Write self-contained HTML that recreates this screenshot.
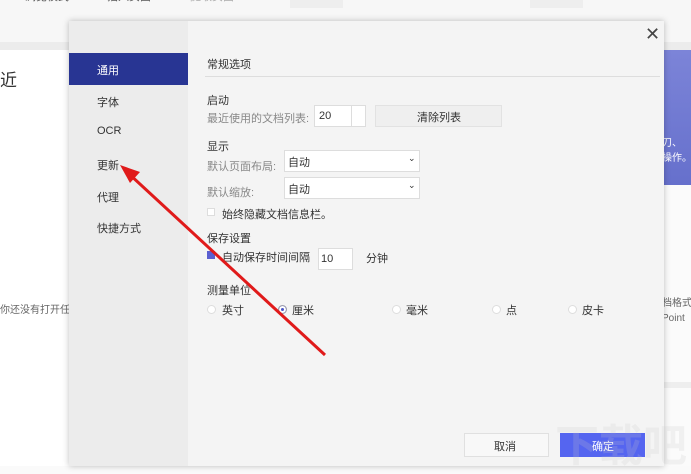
<!DOCTYPE html>
<html><head><meta charset="utf-8"><style>
*{margin:0;padding:0;box-sizing:border-box}
body{width:691px;height:466px;overflow:hidden;position:relative;background:#fafafa;font-family:"Liberation Sans","Noto Sans CJK SC",sans-serif;font-size:11px;color:#333}
.a{position:absolute;white-space:nowrap}
.inp{position:absolute;background:#fff;border:1px solid #ddd}
.rad{position:absolute;width:9px;height:9px;border-radius:50%;border:1px solid #ddd;background:#fff}
</style></head><body>
<div class="a" style="left:0;top:0;width:691px;height:42px;background:#f7f7f7"></div>
<div class="a" style="left:0;top:0;width:691px;height:7px;color:#555;font-size:11px;line-height:0">
<span class="a" style="left:25px;top:-3px">浏览模式</span><span class="a" style="left:107px;top:-3px">插入页面</span><span class="a" style="left:190px;top:-3px;color:#aaa">提取页面</span></div>
<div class="a" style="left:290px;top:0;width:53px;height:8px;background:#eee"></div>
<div class="a" style="left:530px;top:0;width:53px;height:8px;background:#eee"></div>
<div class="a" style="left:0;top:42px;width:691px;height:8px;background:#ececec"></div>
<div class="a" style="left:0;top:50px;width:70px;height:416px;background:#fff"></div>
<div class="a" style="left:0;top:66px;font-size:17px;color:#333">近</div>
<div class="a" style="left:0;top:301px;font-size:10px;color:#666">你还没有打开任</div>
<div class="a" style="left:664px;top:50px;width:27px;height:135px;background:linear-gradient(#7c84d8,#6670cc)"></div>
<div class="a" style="left:662px;top:134px;font-size:10px;color:#fff">刀、<br>操作。</div>
<div class="a" style="left:664px;top:185px;width:27px;height:281px;background:#fbfbfb"></div>
<div class="a" style="left:662px;top:296px;font-size:10px;color:#666;line-height:15px">档格式<br>Point</div>
<div class="a" style="left:664px;top:382px;width:27px;height:6px;background:#eee"></div>
<div class="a" style="left:69px;top:21px;width:595px;height:445px;background:#f4f4f4;box-shadow:0 0 6px rgba(0,0,0,.25)"></div>
<div class="a" style="left:69px;top:21px;width:119px;height:445px;background:#ececec"></div>
<div class="a" style="left:69px;top:53px;width:119px;height:32px;background:#283593"></div>
<div class="a" style="left:97px;top:62px;color:#fff">通用</div>
<div class="a" style="left:97px;top:94px">字体</div>
<div class="a" style="left:97px;top:125px">OCR</div>
<div class="a" style="left:97px;top:157px">更新</div>
<div class="a" style="left:97px;top:189px">代理</div>
<div class="a" style="left:97px;top:220px">快捷方式</div>
<div class="a" style="left:645px;top:24px;font-size:18px;color:#444">✕</div>
<div class="a" style="left:207px;top:56px">常规选项</div>
<div class="a" style="left:205px;top:76px;width:455px;height:1px;background:#ddd"></div>
<div class="a" style="left:207px;top:92px">启动</div>
<div class="a" style="left:207px;top:110px;color:#888">最近使用的文档列表:</div>
<div class="inp" style="left:314px;top:105px;width:52px;height:22px"></div><div class="a" style="left:319px;top:110px">20</div>
<div class="a" style="left:351px;top:105px;width:1px;height:22px;background:#ddd"></div>
<div class="a" style="left:375px;top:105px;width:127px;height:22px;background:#efefef;border:1px solid #e2e2e2"></div>
<div class="a" style="left:417px;top:109px">清除列表</div>
<div class="a" style="left:207px;top:138px">显示</div>
<div class="a" style="left:207px;top:158px;color:#888">默认页面布局:</div>
<div class="inp" style="left:284px;top:150px;width:136px;height:22px"></div><div class="a" style="left:288px;top:154px">自动</div><div class="a" style="left:408px;top:153px;font-size:9px">⌄</div>
<div class="a" style="left:207px;top:184px;color:#888">默认缩放:</div>
<div class="inp" style="left:284px;top:177px;width:136px;height:22px"></div><div class="a" style="left:288px;top:181px">自动</div><div class="a" style="left:408px;top:180px;font-size:9px">⌄</div>
<div class="a" style="left:207px;top:208px;width:8px;height:8px;background:#fff;border:1px solid #ddd"></div>
<div class="a" style="left:222px;top:206px">始终隐藏文档信息栏。</div>
<div class="a" style="left:207px;top:230px">保存设置</div>
<div class="a" style="left:207px;top:251px;width:8px;height:8px;background:#5a5fd0"></div>
<div class="a" style="left:222px;top:249px">自动保存时间间隔</div>
<div class="inp" style="left:318px;top:248px;width:35px;height:22px"></div><div class="a" style="left:321px;top:253px">10</div>
<div class="a" style="left:366px;top:250px">分钟</div>
<div class="a" style="left:207px;top:282px">测量单位</div>
<div class="rad" style="left:207px;top:305px"></div><div class="a" style="left:222px;top:302px">英寸</div>
<div class="rad" style="left:278px;top:305px;border-color:#99a;box-shadow:inset 0 0 0 2px #fff;background:#4a55c8"></div><div class="a" style="left:292px;top:302px">厘米</div>
<div class="rad" style="left:392px;top:305px"></div><div class="a" style="left:406px;top:302px">毫米</div>
<div class="rad" style="left:492px;top:305px"></div><div class="a" style="left:506px;top:302px">点</div>
<div class="rad" style="left:568px;top:305px"></div><div class="a" style="left:582px;top:302px">皮卡</div>
<div class="a" style="left:464px;top:433px;width:85px;height:24px;background:#f8f8f8;border:1px solid #e0e0e0"></div>
<div class="a" style="left:494px;top:438px">取消</div>
<div class="a" style="left:560px;top:433px;width:85px;height:24px;background:#5565f0"></div>
<div class="a" style="left:592px;top:438px;color:#fff">确定</div>
<div class="a" style="left:555px;top:410px;font-size:44px;color:rgba(200,200,200,.2);font-weight:bold">下载吧</div>
<svg class="a" style="left:0;top:0" width="691" height="466"><line x1="325" y1="355" x2="128" y2="173" stroke="#e01a1a" stroke-width="3"/><polygon points="120,165 140,172 130,183" fill="#e01a1a"/></svg>
</body></html>
